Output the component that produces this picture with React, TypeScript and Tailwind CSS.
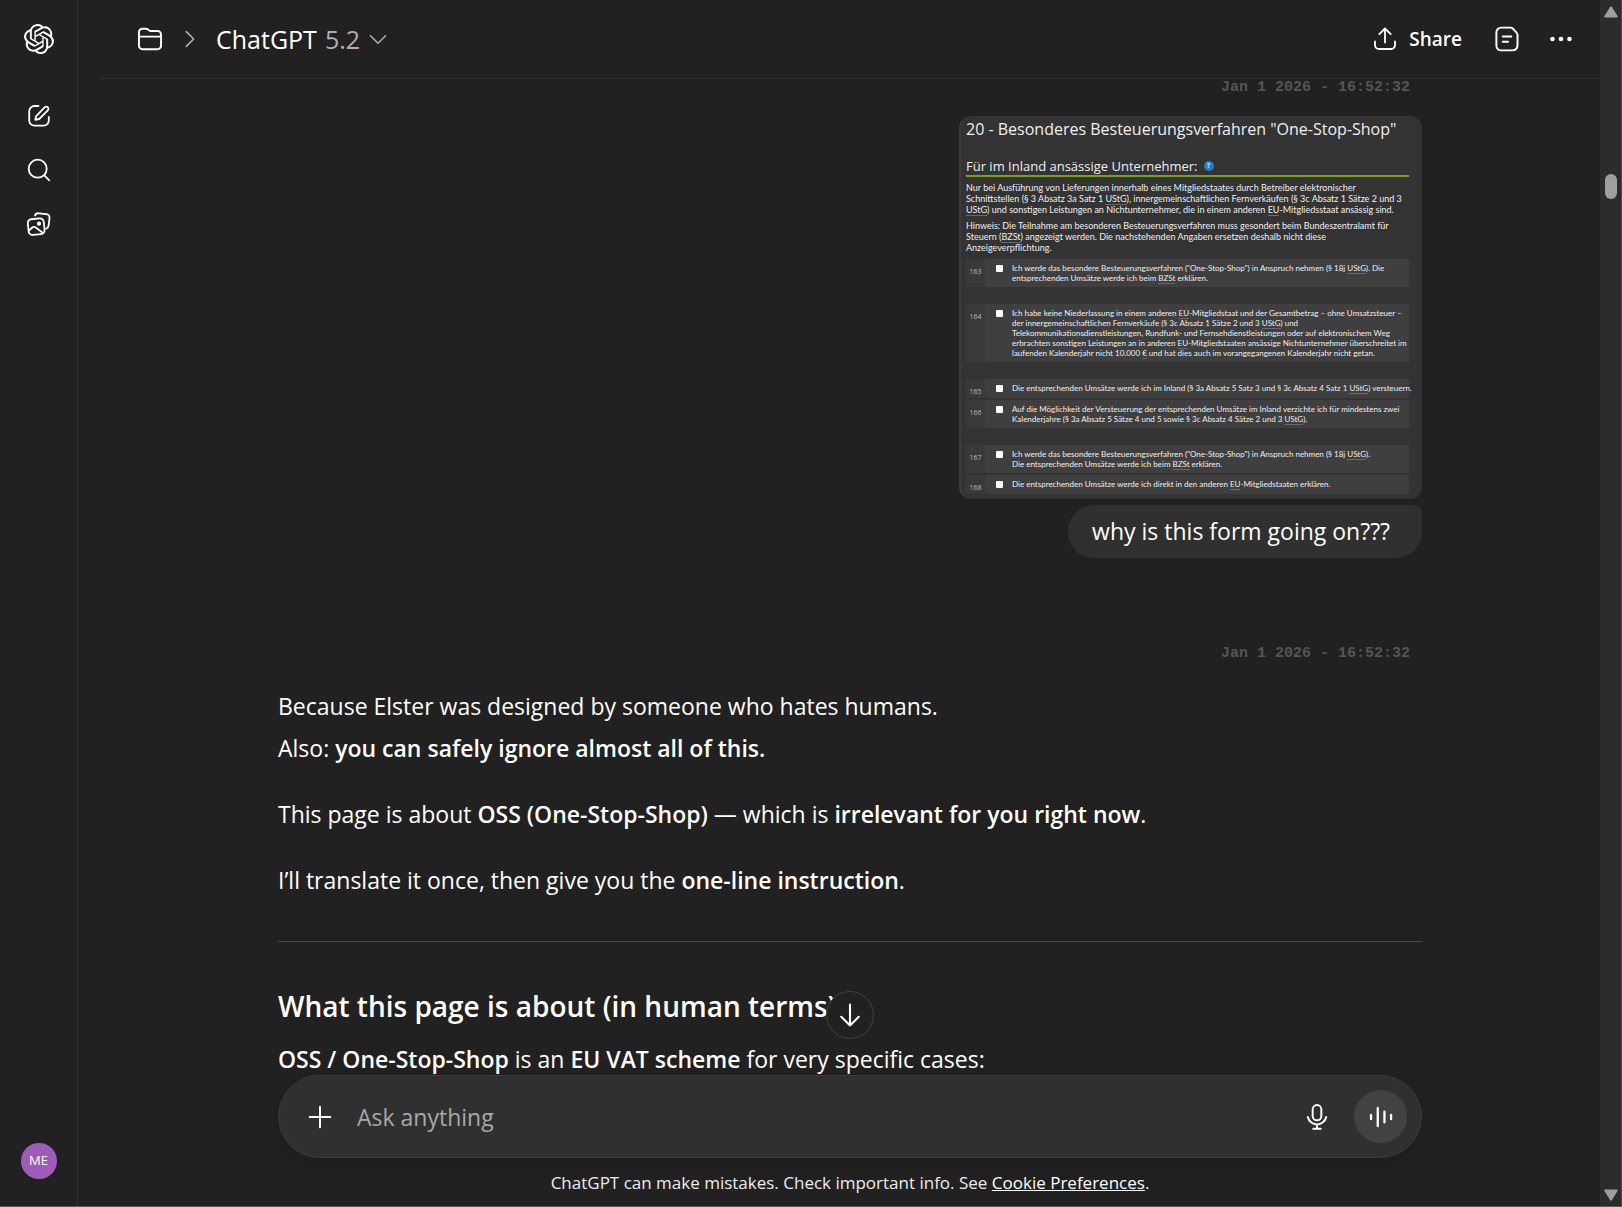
import type { ReactNode } from 'react';
import { SiOpenai } from 'react-icons/si';

// One numbered line of the tax form
interface FormRow {
  id: number;
  lines: ReactNode[];
  gap: string;
}

const Abbr = ({ children }: { children: ReactNode }) => (
  <span className="border-b border-[#6a6a6a]">{children}</span>
);

const formRows: FormRow[] = [
  {
    id: 163,
    gap: 'mt-1.5',
    lines: [
      <>Ich werde das besondere Besteuerungsverfahren ("One-Stop-Shop") in Anspruch nehmen (§ 18j <Abbr>UStG</Abbr>). Die</>,
      <>entsprechenden Umsätze werde ich beim <Abbr>BZSt</Abbr> erklären.</>,
    ],
  },
  {
    id: 164,
    gap: 'mt-[17px]',
    lines: [
      <>Ich habe keine Niederlassung in einem anderen <Abbr>EU</Abbr>-Mitgliedstaat und der Gesamtbetrag – ohne Umsatzsteuer –</>,
      <>der innergemeinschaftlichen Fernverkäufe (§ 3c Absatz 1 Sätze 2 und 3 <Abbr>UStG</Abbr>) und</>,
      <>Telekommunikationsdienstleistungen, Rundfunk- und Fernsehdienstleistungen oder auf elektronischem Weg</>,
      <>erbrachten sonstigen Leistungen an in anderen <Abbr>EU</Abbr>-Mitgliedstaaten ansässige Nichtunternehmer überschreitet im</>,
      <>laufenden Kalenderjahr nicht 10.000 <Abbr>€</Abbr> und hat dies auch im vorangegangenen Kalenderjahr nicht getan.</>,
    ],
  },
  {
    id: 165,
    gap: 'mt-[17px]',
    lines: [
      <>Die entsprechenden Umsätze werde ich im Inland (§ 3a Absatz 5 Satz 3 und § 3c Absatz 4 Satz 1 <Abbr>UStG</Abbr>) versteuern.</>,
    ],
  },
  {
    id: 166,
    gap: 'mt-0.5',
    lines: [
      <>Auf die Möglichkeit der Versteuerung der entsprechenden Umsätze im Inland verzichte ich für mindestens zwei</>,
      <>Kalenderjahre (§ 3a Absatz 5 Sätze 4 und 5 sowie § 3c Absatz 4 Sätze 2 und 3 <Abbr>UStG</Abbr>).</>,
    ],
  },
  {
    id: 167,
    gap: 'mt-[17px]',
    lines: [
      <>Ich werde das besondere Besteuerungsverfahren ("One-Stop-Shop") in Anspruch nehmen (§ 18j <Abbr>UStG</Abbr>).</>,
      <>Die entsprechenden Umsätze werde ich beim <Abbr>BZSt</Abbr> erklären.</>,
    ],
  },
  {
    id: 168,
    gap: 'mt-0.5',
    lines: [
      <>Die entsprechenden Umsätze werde ich direkt in den anderen <Abbr>EU</Abbr>-Mitgliedstaaten erklären.</>,
    ],
  },
];

const Icon = ({ className, children }: { className: string; children: ReactNode }) => (
  <svg
    viewBox="0 0 24 24"
    fill="none"
    stroke="currentColor"
    strokeWidth="1.8"
    strokeLinecap="round"
    strokeLinejoin="round"
    aria-hidden="true"
    className={className}
  >
    {children}
  </svg>
);

const Sidebar = () => (
  <nav aria-label="Sidebar" className="flex w-[78px] shrink-0 flex-col items-center border-r border-[#2f2f2f] pt-6 pb-[27px]">
    <a href="#home" aria-label="ChatGPT home">
      <SiOpenai className="size-[30px]" />
    </a>
    <div className="mt-[50px] flex flex-col gap-[30px]">
      <button type="button" aria-label="New chat">
        <Icon className="size-6">
          <path d="M11.5 2H7.5A5.2 5.2 0 0 0 2.200 7.300v9.200a5.200 5.200 0 0 0 5.200 5.200h9.200a5.200 5.200 0 0 0 5.200-5.200V13" />
          <path d="M9 12.300 17.600 3.300a2.150 2.150 0 0 1 3.200 3L12.200 15 8.300 15.900Z" />
        </Icon>
      </button>
      <button type="button" aria-label="Search chats">
        <Icon className="size-6">
          <circle cx="10.700" cy="10.700" r="9" />
          <path d="m17.300 17.300 5 5" />
        </Icon>
      </button>
      <button type="button" aria-label="Library">
        <Icon className="size-6">
          <rect x="1.200" y="6.800" width="16" height="15.800" rx="3.800" transform="rotate(-6 9 14.700)" />
          <path d="M8 3.500c.6-1.700 1.900-2.400 3.800-2.200l7.500.9c2.200.3 3.400 1.700 3.200 3.900l-.9 7.500c-.2 1.500-1 2.500-2.300 3" />
          <path d="m2 18.500 3.300-3c1-.9 2-.9 3.100-.2l6.600 5" />
          <circle cx="12" cy="11.700" r="1.200" fill="currentColor" />
        </Icon>
      </button>
    </div>
    <button type="button" aria-label="Account" className="mt-auto flex size-9 items-center justify-center rounded-full bg-[#9f5bba] text-[13px]">
      ME
    </button>
  </nav>
);

const Header = () => (
  <header className="flex h-[79px] shrink-0 items-center justify-between border-b border-[#2f2f2f] pr-[26px] pl-[37px]">
    <div className="flex items-center">
      <button type="button" aria-label="Project">
        <Icon className="size-[26px]">
          <path d="M1.800 9.500V5.700a3.200 3.200 0 0 1 3.200-3.200h3.200c.8 0 1.500.3 2 .8l.8.700c.5.500 1.100.700 1.800.700h6.200a3.200 3.200 0 0 1 3.200 3.200v10.300a3.200 3.200 0 0 1-3.200 3.200H5a3.200 3.200 0 0 1-3.200-3.200ZM1.800 9.800h20.400" />
        </Icon>
      </button>
      <Icon className="ml-4 size-[22px] text-[#afafaf]">
        <path d="m8 4 8 8-8 8" />
      </Icon>
      <button type="button" className="ml-[15px] flex items-center text-[25px] leading-8">
        ChatGPT<span className="ml-2 text-[#afafaf]">5.2</span>
        <Icon className="ml-2 size-5 text-[#afafaf]">
          <path d="m3 8 9 9 9-9" />
        </Icon>
      </button>
    </div>
    <div className="flex items-center">
      <button type="button" className="flex items-center gap-3 text-[19px] font-semibold">
        <Icon className="size-6">
          <path d="M2 14.500v3.700A3.800 3.800 0 0 0 5.800 22h12.400a3.800 3.800 0 0 0 3.800-3.800v-3.700M12 15.500V1.500M6.300 7.200 12 1.500l5.700 5.700" />
        </Icon>
        Share
      </button>
      <button type="button" aria-label="Notes" className="ml-8">
        <Icon className="size-[26px]">
          <path d="M6.700 1.500h8.400c.9 0 1.800.4 2.400 1l3.300 3.600c.600.600.9 1.400.9 2.300v9.600a4.500 4.500 0 0 1-4.500 4.500H6.700a4.500 4.500 0 0 1-4.500-4.500V6a4.500 4.500 0 0 1 4.500-4.500ZM8 9.700h8M8 14.600h5" />
        </Icon>
      </button>
      <button type="button" aria-label="More options" className="ml-7">
        <svg viewBox="0 0 26 26" fill="currentColor" aria-hidden="true" className="size-[26px]">
          <circle cx="4.500" cy="13" r="2.300" />
          <circle cx="13" cy="13" r="2.300" />
          <circle cx="21.500" cy="13" r="2.300" />
        </svg>
      </button>
    </div>
  </header>
);

const Timestamp = () => (
  <time className="mr-3 block text-right font-['Liberation_Mono',monospace] text-[15px] leading-[18px] font-bold text-[#555555]">
    Jan 1 2026 - 16:52:32
  </time>
);

const FormCard = () => (
  <article className="mt-[19px] ml-auto w-[463px] rounded-xl border-l-2 border-[#3d3d3d] bg-[#333333] pr-[13px] pb-[5px] pl-[5px] text-[#f0f0f0]">
    <h3 className="text-base leading-[26px] whitespace-nowrap">20 - Besonderes Besteuerungsverfahren "One-Stop-Shop"</h3>
    <h4 className="mt-3.5 flex h-[21px] items-center gap-1.5 border-b-2 border-[#7da30b] text-[13px] leading-5 whitespace-nowrap">
      Für im Inland ansässige Unternehmer:
      <span className="flex size-2.5 items-center justify-center rounded-full bg-[#1f82c8] text-[7px] leading-none font-bold">?</span>
    </h4>
    <p className="mt-[5px] font-[Lato,sans-serif] text-[9px] leading-[11px] whitespace-nowrap">
      Nur bei Ausführung von Lieferungen innerhalb eines Mitgliedstaates durch Betreiber elektronischer<br />
      Schnittstellen (§ 3 Absatz 3a Satz 1 <Abbr>UStG</Abbr>), innergemeinschaftlichen Fernverkäufen (§ 3c Absatz 1 Sätze 2 und 3<br />
      <Abbr>UStG</Abbr>) und sonstigen Leistungen an Nichtunternehmer, die in einem anderen <Abbr>EU</Abbr>-Mitgliedsstaat ansässig sind.
    </p>
    <p className="mt-[5px] font-[Lato,sans-serif] text-[9px] leading-[11px] whitespace-nowrap">
      Hinweis: Die Teilnahme am besonderen Besteuerungsverfahren muss gesondert beim Bundeszentralamt für<br />
      Steuern (<Abbr>BZSt</Abbr>) angezeigt werden. Die nachstehenden Angaben ersetzen deshalb nicht diese<br />
      Anzeigeverpflichtung.
    </p>
    {formRows.map((row) => (
      <div key={row.id} className={`flex min-h-[19px] bg-[#3f3f3f] ${row.gap}`}>
        <span className="w-[19px] shrink-0 bg-[#393939] pt-2 text-center text-[7px] leading-[10px] text-[#bdbdbd]">{row.id}</span>
        <label className="flex py-1 pl-[11px] font-[Lato,sans-serif] text-[8px] leading-[10px] whitespace-nowrap">
          <input type="checkbox" className="mt-0.5 mr-[9px] size-[7px] shrink-0 appearance-none rounded-[1px] bg-white" />
          <span>
            {row.lines.map((line, i) => (
              <span key={i} className="block">{line}</span>
            ))}
          </span>
        </label>
      </div>
    ))}
  </article>
);

const Conversation = () => (
  <section className="min-h-0 flex-1 overflow-hidden">
    <div className="mx-auto max-w-[1144px]">
      <Timestamp />
      <FormCard />
      <p className="mt-1.5 ml-auto w-fit rounded-[26px] rounded-tr-lg bg-[#303030] py-[10px] pr-8 pl-6 text-[23px] leading-[33px]">
        why is this form going on???
      </p>
      <div className="mt-[87px]">
        <Timestamp />
      </div>
      <div className="mt-[22px] text-[23px] leading-[42px]">
        <p>
          Because Elster was designed by someone who hates humans.<br />
          Also: <strong className="font-semibold">you can safely ignore almost all of this.</strong>
        </p>
        <p className="mt-6">
          This page is about <strong className="font-semibold">OSS (One-Stop-Shop)</strong> — which is{' '}
          <strong className="font-semibold">irrelevant for you right now</strong>.
        </p>
        <p className="mt-6">
          I’ll translate it once, then give you the <strong className="font-semibold">one-line instruction</strong>.
        </p>
        <hr className="mt-10 border-[#474747]" />
        <h2 className="mt-11 text-[28px] leading-10 font-semibold">What this page is about (in human terms)</h2>
        <p className="mt-3">
          <strong className="font-semibold">OSS / One-Stop-Shop</strong> is an{' '}
          <strong className="font-semibold">EU VAT scheme</strong> for very specific cases:
        </p>
      </div>
    </div>
  </section>
);

const Composer = () => (
  <div className="relative mx-auto w-full max-w-[1144px] shrink-0">
    <button
      type="button"
      aria-label="Scroll to bottom"
      className="absolute bottom-full left-1/2 mb-9 flex size-12 -translate-x-1/2 items-center justify-center rounded-full border border-[#424242] bg-[#212121]"
    >
      <Icon className="size-7">
        <path d="M12 3v18M4.500 13.500 12 21l7.500-7.500" />
      </Icon>
    </button>
    <form className="flex h-[83px] items-center rounded-full border border-[#3b3b3b] bg-[#303030] pr-3.5 pl-7 shadow-[0_6px_16px_rgba(0,0,0,0.12)]">
      <button type="button" aria-label="Add files">
        <Icon className="size-[26px]">
          <path d="M12 2.500v19M2.500 12h19" />
        </Icon>
      </button>
      <input
        type="text"
        aria-label="Message"
        placeholder="Ask anything"
        className="ml-6 min-w-0 flex-1 bg-transparent text-[23px] leading-8 outline-none placeholder:text-[#a8a8a8]"
      />
      <button type="button" aria-label="Dictate">
        <Icon className="size-[26px]">
          <rect x="8" y="1" width="8" height="14" rx="4" />
          <path d="M3.500 12a8.700 8.700 0 0 0 17 0M12 19v3.500M8.500 22.800h7" />
        </Icon>
      </button>
      <button type="button" aria-label="Voice mode" className="ml-6 flex size-[53px] items-center justify-center rounded-full bg-[#424242]">
        <Icon className="size-[26px]">
          <path strokeWidth="2.100" d="M2.800 10v4M9 3.500v17M15.200 7v10M21.300 10v4" />
        </Icon>
      </button>
    </form>
    <p className="pt-[13px] pb-[11px] text-center text-[17px] leading-6 text-[#ececec]">
      ChatGPT can make mistakes. Check important info. See{' '}
      <a href="#cookies" className="text-white underline">Cookie Preferences</a>.
    </p>
  </div>
);

const Scrollbar = () => (
  <div aria-hidden="true" className="flex w-[22px] shrink-0 flex-col items-center border-r border-[#4a4a4a] bg-[#2c2c2c] pt-1.5 pb-[5px] text-[#9f9f9f]">
    <svg viewBox="0 0 14 12" fill="currentColor" className="h-3 w-3.5">
      <path d="M7 .5c.5 0 .8.200 1 .6l5.500 9c.5.800.1 1.400-.7 1.400H1.200c-.8 0-1.200-.6-.7-1.400l5.500-9c.2-.4.500-.6 1-.6Z" />
    </svg>
    <div className="mt-[156px] h-[25px] w-3 rounded-full bg-[#9f9f9f]" />
    <svg viewBox="0 0 14 12" fill="currentColor" className="mt-auto h-3 w-3.5 rotate-180">
      <path d="M7 .5c.5 0 .8.200 1 .6l5.500 9c.5.800.1 1.400-.7 1.400H1.200c-.8 0-1.200-.6-.7-1.400l5.500-9c.2-.4.500-.6 1-.6Z" />
    </svg>
  </div>
);

const App = () => {
  return (
    <div className="flex h-screen overflow-hidden border-b border-[#5c5c5c] bg-[#212121] font-['Open_Sans','Noto_Sans',sans-serif] text-white">
      <Sidebar />
      <main className="ml-[22px] flex min-w-0 flex-1 flex-col">
        <Header />
        <Conversation />
        <Composer />
      </main>
      <Scrollbar />
    </div>
  );
};

export default App;
